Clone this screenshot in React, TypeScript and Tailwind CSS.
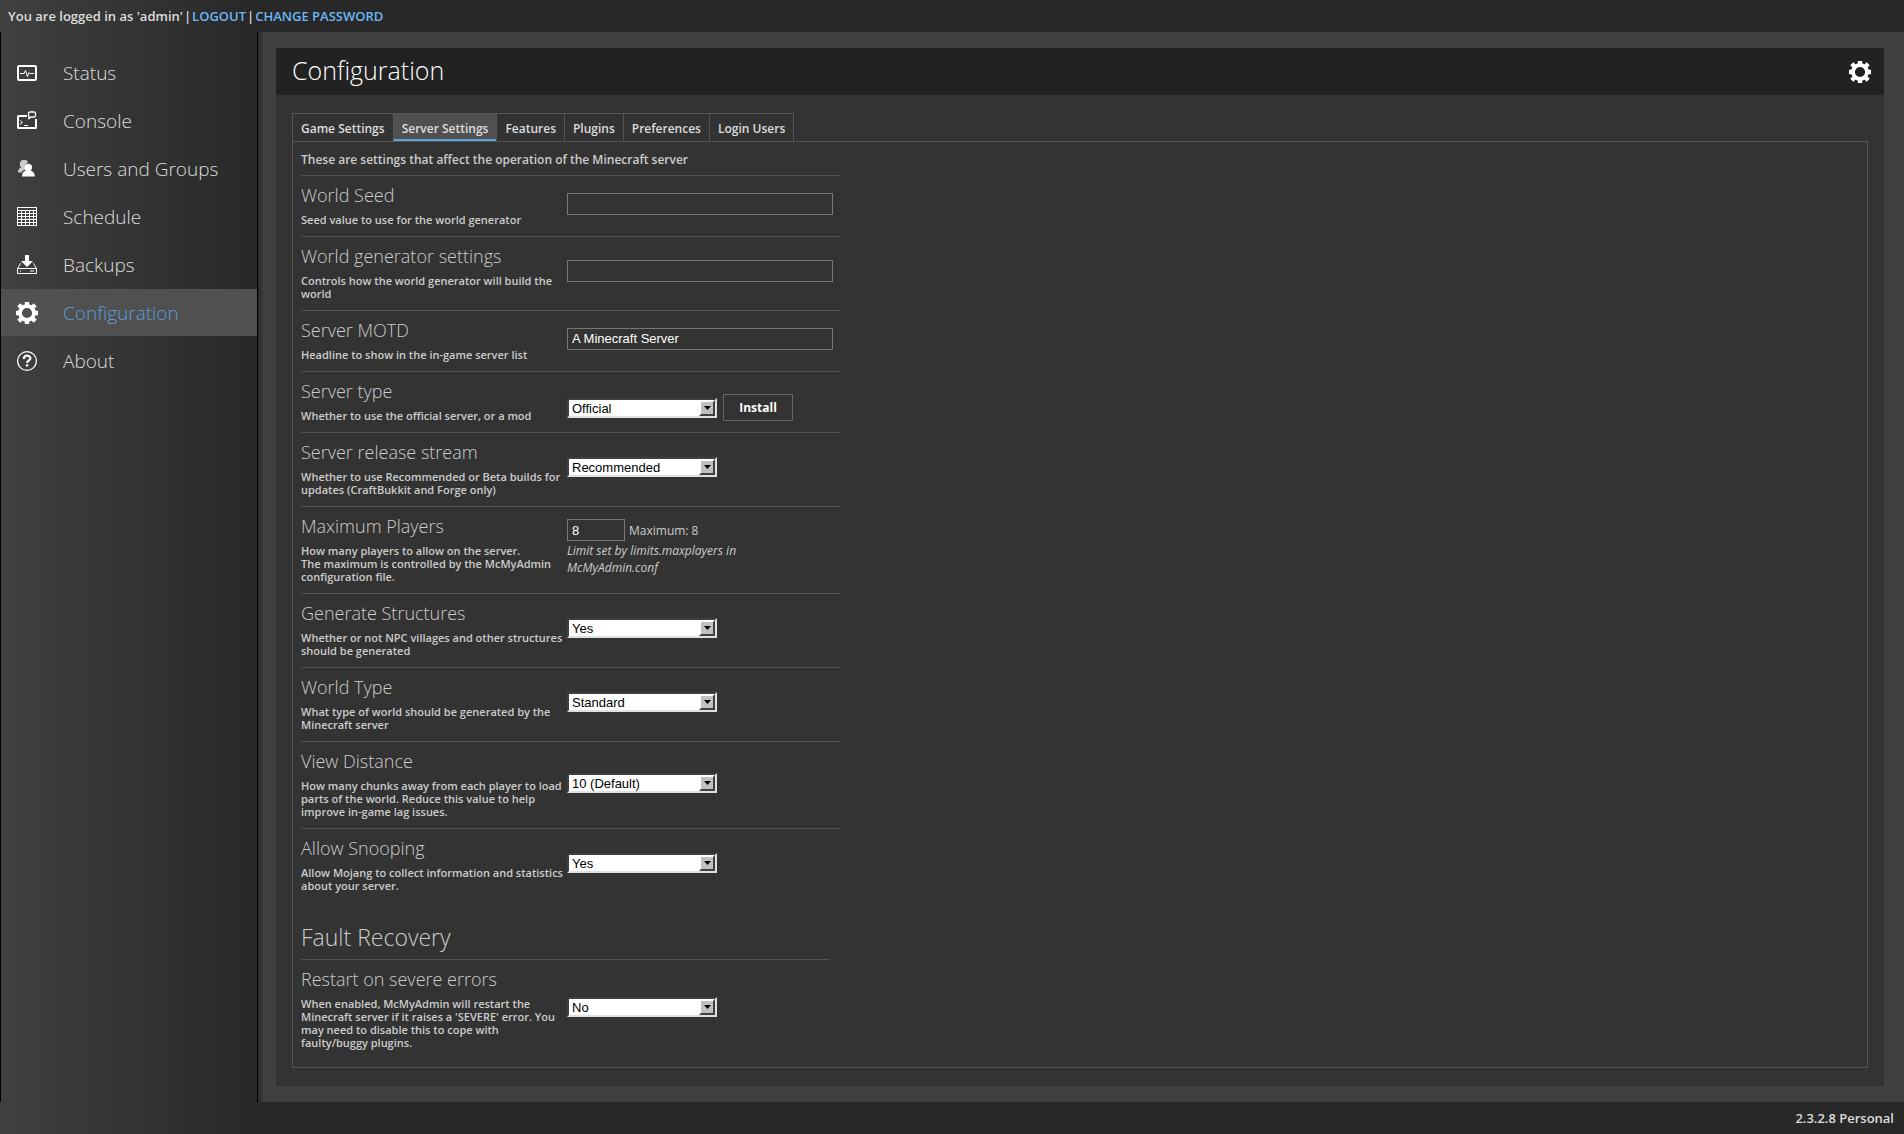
import type { ReactNode } from "react";

type SettingProps = {
  id: string;
  title: string;
  description: ReactNode;
  first?: boolean;
  children: ReactNode;
};

const navItems = [
  { label: "Status", icon: <StatusIcon /> },
  { label: "Console", icon: <ConsoleIcon /> },
  { label: "Users and Groups", icon: <UsersIcon /> },
  { label: "Schedule", icon: <ScheduleIcon /> },
  { label: "Backups", icon: <BackupIcon /> },
  { label: "Configuration", icon: <GearIcon />, active: true },
  { label: "About", icon: <AboutIcon /> },
];

const tabs = [
  "Game Settings",
  "Server Settings",
  "Features",
  "Plugins",
  "Preferences",
  "Login Users",
];

function StatusIcon() {
  return (
    <svg width="22" height="22" viewBox="0 0 22 22" fill="none" stroke="#fff">
      <rect x="2" y="4" width="18" height="14" rx="1" strokeWidth="2" />
      <path d="M4 11.5h4l1.5-3 2 6 1.5-4 1 1h4" />
    </svg>
  );
}

function ConsoleIcon() {
  return (
    <svg width="22" height="22" viewBox="0 0 22 22" fill="none" stroke="#fff">
      <path d="M11 6H2.500Q2 6 2 6.500V17.500Q2 18 2.500 18H19.500Q20 18 20 17.500V9" strokeWidth="2" />
      <path d="M4 10.500l2.500 2-2.500 2M8 15.500h4" />
      <path d="M12.500 9l1-2q-1-.5-1-1.500V3.500q0-1.500 1.500-1.500h4q1.500 0 1.500 1.500v2q0 1.500-1.500 1.500h-3z" strokeWidth="1.300" />
    </svg>
  );
}

function UsersIcon() {
  return (
    <svg width="22" height="22" viewBox="0 0 22 22">
      <path
        d="M2 14.500c0-3 1-4 3-5C3.500 7.500 3.500 5.500 4.300 4 5 2.500 6.500 1.800 8 1.800c2.200 0 3.600 1.200 4 3-3 .7-4 4-2.500 6.700-2.500 1-3.500 1.500-4 3z"
        fill="#ccc"
      />
      <path
        d="M6 18.500c0-3.500 1-5 3.800-5.800C7.800 10.500 7.800 5.800 12.300 5.800s4.500 4.700 2.500 6.900c2.800.8 4 2.300 4 5.800z"
        fill="#fff"
      />
    </svg>
  );
}

function ScheduleIcon() {
  return (
    <svg width="22" height="22" viewBox="0 0 22 22" fill="none" stroke="#fff">
      <rect x="1.500" y="1.500" width="19" height="18" />
      <path d="M1 4.500h20M1 7.500h20M1 10.500h20M1 13.500h20M1 16.500h20M5.500 5v15M9.500 5v15M13.500 5v15M17.500 5v15" />
    </svg>
  );
}

function BackupIcon() {
  return (
    <svg width="22" height="22" viewBox="0 0 22 22" fill="none" stroke="#fff">
      <path d="M9 1h4v6h4l-6 6-6-6h4z" fill="#fff" stroke="none" />
      <path d="M5 9.500H4.500L1.500 14.500V19.500h19V14.500L17.500 9.500H17M1.500 14.500h19" />
      <path d="M4 17h1M14 17h4" />
    </svg>
  );
}

function GearIcon() {
  return (
    <svg width="22" height="22" viewBox="0 0 22 22" fill="none" stroke="#fff">
      <circle cx="11" cy="11" r="7" strokeWidth="3.800" />
      <g strokeWidth="4.400">
        <path d="M11 0v4M11 18v4M0 11h4M18 11h4" />
        <path d="M2.800 2.800l3 3M16.200 16.200l3 3M2.800 19.200l3-3M16.200 5.800l3-3" />
      </g>
    </svg>
  );
}

function AboutIcon() {
  return (
    <svg width="22" height="22" viewBox="0 0 22 22" fill="none" stroke="#fff">
      <circle cx="11" cy="11" r="9.400" strokeWidth="1.300" />
      <path d="M7.800 9c0-4.300 6.600-4.300 6.600-.7 0 2.200-3.300 2.200-3.300 4.700" strokeWidth="2.200" />
      <path d="M11.100 14.300v2.200" strokeWidth="2.400" />
    </svg>
  );
}

function SelectBox({ id, value }: { id: string; value: string }) {
  return (
    <div className="relative h-5 w-[150px]">
      <select
        id={id}
        defaultValue={value}
        className="block h-5 w-full appearance-none border-2 border-t-[#404040] border-r-[#e0e0e0] border-b-[#e0e0e0] border-l-[#404040] bg-white px-[3px] pt-px font-[Liberation_Sans,sans-serif] text-[13px] leading-[15px] text-black"
      >
        <option>{value}</option>
      </select>
      <span className="pointer-events-none absolute top-0.5 right-0.5 flex h-4 w-4 items-center justify-center border-2 border-t-white border-r-[#404040] border-b-[#404040] border-l-white bg-[#c0c0c0]">
        <svg width="7" height="4" viewBox="0 0 7 4" className="shrink-0">
          <path d="M0 0h7L3.500 4z" fill="#000" />
        </svg>
      </span>
    </div>
  );
}

function TextBox({ id, value = "" }: { id: string; value?: string }) {
  return (
    <input
      id={id}
      type="text"
      defaultValue={value}
      className="block h-[22px] w-[266px] border border-[#777] bg-transparent px-1 font-[Liberation_Sans,sans-serif] text-[13px] text-white"
    />
  );
}

function Setting({ id, title, description, first = false, children }: SettingProps) {
  return (
    <div className={first ? "flex" : "flex border-t border-[#555]"}>
      <div className="w-[266px] pt-[7px] pb-2.5">
        <label htmlFor={id} className="block pb-[5px] text-lg leading-[25px] font-light text-[#ccc]">
          {title}
        </label>
        <p className="text-[11px] leading-[13px] font-semibold whitespace-nowrap text-[#ccc]">
          {description}
        </p>
      </div>
      <div className="flex w-[274px] items-center pb-[5px]">{children}</div>
    </div>
  );
}

export default function App() {
  return (
    <div className="flex min-h-screen flex-col bg-[#282828] bg-[linear-gradient(to_right,#404040,#282828_257px)] font-[Open_Sans,sans-serif] text-[13px] text-[#ddd]">
      <header className="flex h-8 items-center gap-px px-2 pt-0.5 text-[13px] font-semibold">
        <span>You are logged in as 'admin'</span>|
        <a href="#logout" className="text-[#6bb8f5]">LOGOUT</a>|
        <a href="#password" className="text-[#6bb8f5]">CHANGE PASSWORD</a>
      </header>

      <div className="flex grow">
        <nav className="w-[258px] shrink-0 border-x border-black pt-[17px]">
          {navItems.map((item) => (
            <a
              key={item.label}
              href="#nav"
              className={
                item.active
                  ? "mb-px flex h-[47px] items-center gap-[25px] bg-[#505050] pl-[15px] text-[19px] font-light text-[#5a9fd8]"
                  : "mb-px flex h-[47px] items-center gap-[25px] pl-[15px] text-[19px] font-light text-[#ddd]"
              }
            >
              {item.icon}
              <span className="pt-0.5">{item.label}</span>
            </a>
          ))}
        </nav>

        <main className="min-w-0 grow bg-[#404040] bg-[linear-gradient(to_right,#282828,#404040_6px)] py-4 pr-5 pl-[18px]">
          <section className="bg-[#333]">
            <div className="flex h-[47px] items-center justify-between bg-[#222] pr-[13px] pl-4">
              <h1 className="pb-0.5 text-[25px] font-light text-white">Configuration</h1>
              <button type="button" aria-label="Options">
                <GearIcon />
              </button>
            </div>

            <div className="px-4 pt-[18px] pb-[18px]">
              <div className="flex">
                {tabs.map((tab, i) => (
                  <button
                    key={tab}
                    type="button"
                    className={
                      i === 1
                        ? "h-7 border-t border-b-2 border-l border-[#555] border-b-[#5aa5e0] bg-[#505050] px-2 pt-1 text-xs font-semibold"
                        : "h-7 border-t border-l border-[#555] px-2 pt-0.5 text-xs font-semibold last:border-r"
                    }
                  >
                    {tab}
                  </button>
                ))}
              </div>

              <div className="border border-[#555] px-2 pb-2">
                <p className="pt-[9px] pb-[7px] text-xs leading-[17px] font-semibold text-[#ccc]">
                  These are settings that affect the operation of the Minecraft server
                </p>
                <div className="w-[540px]">
                  <Setting id="seed" title="World Seed" description="Seed value to use for the world generator">
                    <TextBox id="seed" />
                  </Setting>
                  <Setting
                    id="generator"
                    title="World generator settings"
                    description={<>Controls how the world generator will build the<br />world</>}
                  >
                    <TextBox id="generator" />
                  </Setting>
                  <Setting id="motd" title="Server MOTD" description="Headline to show in the in-game server list">
                    <TextBox id="motd" value="A Minecraft Server" />
                  </Setting>
                  <Setting id="type" title="Server type" description="Whether to use the official server, or a mod">
                    <div className="flex items-center gap-1.5 pt-4">
                      <SelectBox id="type" value="Official" />
                      <button
                        type="button"
                        className="h-[27px] w-[70px] border border-[#666] pt-px text-xs font-bold text-white"
                      >
                        Install
                      </button>
                    </div>
                  </Setting>
                  <Setting
                    id="stream"
                    title="Server release stream"
                    description={<>Whether to use Recommended or Beta builds for<br />updates (CraftBukkit and Forge only)</>}
                  >
                    <SelectBox id="stream" value="Recommended" />
                  </Setting>
                  <Setting
                    id="players"
                    title="Maximum Players"
                    description={
                      <>
                        How many players to allow on the server.<br />
                        The maximum is controlled by the McMyAdmin<br />
                        configuration file.
                      </>
                    }
                  >
                    <div className="text-xs leading-[17px] text-[#ccc]">
                      <div className="flex items-center gap-1">
                        <input
                          id="players"
                          type="text"
                          defaultValue="8"
                          className="h-[22px] w-[58px] border border-[#777] px-1 font-[Liberation_Sans,sans-serif] text-[13px] text-white"
                        />
                        Maximum: 8
                      </div>
                      <p className="pt-px italic">Limit set by limits.maxplayers in<br />McMyAdmin.conf</p>
                    </div>
                  </Setting>
                  <Setting
                    id="structures"
                    title="Generate Structures"
                    description={<>Whether or not NPC villages and other structures<br />should be generated</>}
                  >
                    <SelectBox id="structures" value="Yes" />
                  </Setting>
                  <Setting
                    id="world"
                    title="World Type"
                    description={<>What type of world should be generated by the<br />Minecraft server</>}
                  >
                    <SelectBox id="world" value="Standard" />
                  </Setting>
                  <Setting
                    id="distance"
                    title="View Distance"
                    description={
                      <>
                        How many chunks away from each player to load<br />
                        parts of the world. Reduce this value to help<br />
                        improve in-game lag issues.
                      </>
                    }
                  >
                    <SelectBox id="distance" value="10 (Default)" />
                  </Setting>
                  <Setting
                    id="snooping"
                    title="Allow Snooping"
                    description={<>Allow Mojang to collect information and statistics<br />about your server.</>}
                  >
                    <SelectBox id="snooping" value="Yes" />
                  </Setting>
                </div>

                <h2 className="w-[528px] border-b border-[#555] pt-[19px] pb-1.5 text-[23px] leading-8 font-light text-[#ccc]">
                  Fault Recovery
                </h2>
                <Setting
                  id="restart"
                  title="Restart on severe errors"
                  first
                  description={
                    <>
                      When enabled, McMyAdmin will restart the<br />
                      Minecraft server if it raises a 'SEVERE' error. You<br />
                      may need to disable this to cope with<br />
                      faulty/buggy plugins.
                    </>
                  }
                >
                  <SelectBox id="restart" value="No" />
                </Setting>
              </div>
            </div>
          </section>
        </main>
      </div>

      <footer className="flex h-8 items-center justify-end px-2.5 pt-0.5 text-[13px] font-semibold">
        2.3.2.8 Personal
      </footer>
    </div>
  );
}
